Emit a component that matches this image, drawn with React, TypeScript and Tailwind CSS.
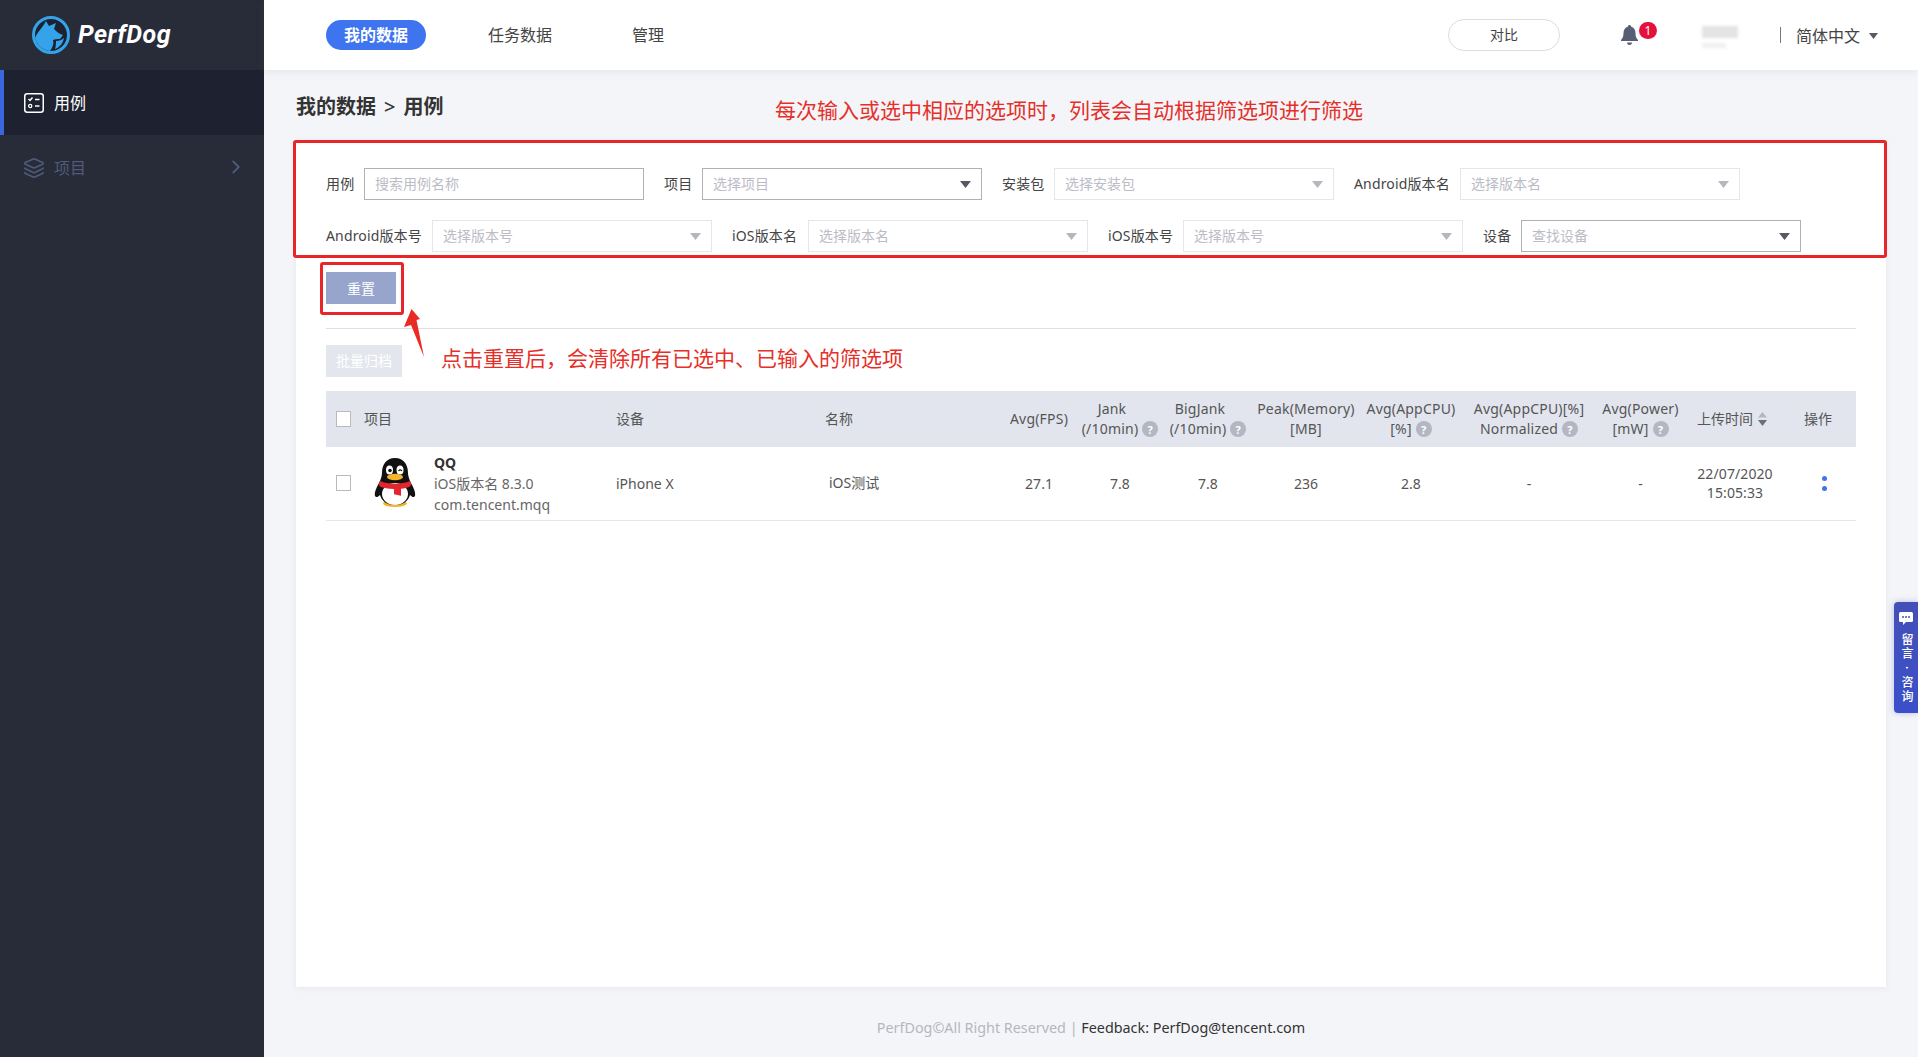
import React from "react";
import { ChevronRight, Layers } from "lucide-react";

function Caret({ dark }: { dark?: boolean }) {
  return (
    <svg width="11" height="7" viewBox="0 0 11 7" className="shrink-0">
      <path d="M0 0h11L5.5 7z" fill={dark ? "#555962" : "#b4b7be"} />
    </svg>
  );
}

function Filter({
  label,
  placeholder,
  strong,
  width,
  input,
}: {
  label: string;
  placeholder: string;
  strong?: boolean;
  width: string;
  input?: boolean;
}) {
  return (
    <div className="flex items-center mr-5">
      <span className={`${width} whitespace-nowrap text-[14px] leading-[32px] tracking-[0.15px] text-[#444] mr-2.5`}>{label}</span>
      <div
        className={`w-[280px] h-8 bg-white border flex items-center justify-between pl-2.5 pr-2.5 text-[14px] text-[#bcbcc6] ${
          strong ? "border-[#b0b1b6]" : "border-[#e4e6ec]"
        }`}
      >
        <span className="pb-[2px]">{placeholder}</span>
        {!input && <Caret dark={strong} />}
      </div>
    </div>
  );
}

function Help() {
  return (
    <span className="ml-[4px] inline-flex items-center justify-center w-[16px] h-[16px] rounded-full bg-[#b4b7c2] text-white text-[11px] leading-none font-bold shrink-0">
      ?
    </span>
  );
}

function Head({ top, bottom, help, shift }: { top: string; bottom?: string; help?: boolean; shift?: boolean }) {
  return (
    <th className="font-normal p-0 align-middle">
      <div className="flex flex-col items-center leading-[20px] tracking-[0.2px] whitespace-nowrap">
        <span className={shift ? "pr-4" : ""}>{top}</span>
        {bottom && (
          <span className="flex items-center">
            {bottom}
            {help && <Help />}
          </span>
        )}
      </div>
    </th>
  );
}

function Penguin() {
  return (
    <svg width="42" height="50" viewBox="0 0 42 50" className="shrink-0">
      <ellipse cx="21" cy="45.5" rx="12" ry="3.5" fill="#f5b324" />
      <path d="M21 0C12 0 8 7 8 15c0 3-1 5-2 8-3 6-6 11-5 15 1 2 3 1 5-1 2 7 8 10 15 10s13-3 15-10c2 2 4 3 5 1 1-4-2-9-5-15-1-3-2-5-2-8C34 7 30 0 21 0z" fill="#111" />
      <ellipse cx="21" cy="36" rx="13" ry="11" fill="#fff" />
      <ellipse cx="15.5" cy="12" rx="3.5" ry="4.5" fill="#fff" />
      <ellipse cx="26" cy="12" rx="3.5" ry="4.5" fill="#fff" />
      <circle cx="16" cy="12.5" r="1.8" fill="#111" />
      <path d="M24.5 13c1-1.6 2.600-1.600 3.500 0" stroke="#111" strokeWidth="1.2" fill="none" />
      <ellipse cx="21" cy="19" rx="8" ry="3.200" fill="#f7b62a" />
      <path d="M6 23c8 3.500 22 3.500 30 0 1.500 1.500 1.500 4 0 5.500-2 1-6 2-9 2.300v7l-7-1.500v-5.300c-6 0-11-1-14-2.500-1.500-1.500-1.500-4 0-5.500z" fill="#e3262e" />
    </svg>
  );
}

function Logo() {
  return (
    <svg width="38" height="38" viewBox="0 0 38 38" className="shrink-0">
      <circle cx="19" cy="19" r="17.500" fill="#1d2230" stroke="#35a3ea" strokeWidth="3" />
      <path d="M3 22C6 15 11 11 14 5l3 5 7-3-2 6c3 3 5 5 9 6l-3 4c-3 0-5 0-7 1 1 3 0 7-3 11-8-1-13-6-15-13z" fill="#35a3ea" />
      <path d="M24 25c3 0 6-1 8-3-1 5-4 9-9 11 1-3 1-6 1-8z" fill="#35a3ea" />
    </svg>
  );
}

function CaseIcon() {
  return (
    <svg width="20" height="20" viewBox="0 0 20 20" fill="none" className="shrink-0">
      <rect x="0.750" y="0.750" width="18.500" height="18.500" rx="2.500" stroke="#fff" strokeWidth="1.500" />
      <path d="M4.500 6l1.500 1.500 2.500-3M11 6.500h4.500M11 13h4.500" stroke="#fff" strokeWidth="1.500" />
      <circle cx="6.200" cy="13" r="1.600" stroke="#fff" strokeWidth="1.300" />
    </svg>
  );
}

function Bell() {
  return (
    <svg width="17" height="20" viewBox="0 0 17 20" className="shrink-0">
      <path d="M8.500 0C9.500 0 10 .7 10 1.500c3 .8 4.500 3.500 4.500 6.500 0 3 .6 5 2.500 7v1H0v-1c1.900-2 2.500-4 2.500-7 0-3 1.500-5.700 4.500-6.500C7 .7 7.500 0 8.500 0z" fill="#5a5e74" />
      <path d="M6 17.500h5c0 1.500-1 2.500-2.500 2.500S6 19 6 17.500z" fill="#5a5e74" />
    </svg>
  );
}

const colClass = [
  "w-[290px]",
  "w-[209px]",
  "w-[179px]",
  "w-[70px]",
  "w-[92px]",
  "w-[84px]",
  "w-[112px]",
  "w-[98px]",
  "w-[138px]",
  "w-[85px]",
  "w-[104px]",
  "w-[69px]",
];

export default function App() {
  return (
    <div className="relative flex h-screen w-full overflow-hidden bg-[#f4f5f9] font-['Noto_Sans','Noto_Sans_CJK_SC',sans-serif] text-[#444]">
      {/* Sidebar */}
      <aside className="w-[264px] shrink-0 bg-[#282c38] flex flex-col">
        <div className="h-[70px] flex items-center pl-[32px] gap-[8px]">
          <Logo />
          <span className="font-['Roboto',sans-serif] italic font-bold text-[25px] text-white tracking-[0.5px]">PerfDog</span>
        </div>
        <div className="h-[65px] bg-[#1e2130] border-l-4 border-[#3a67e0] flex items-center pl-[20px] gap-[10px] text-white text-[16px]">
          <CaseIcon />
          <span>用例</span>
        </div>
        <div className="h-[65px] flex items-center pl-[23px] pr-[17px] gap-[9px] text-[#505a7a] text-[16px]">
          <Layers size={22} strokeWidth={1.8} className="shrink-0" />
          <span className="flex-1">项目</span>
          <ChevronRight size={22} strokeWidth={2} className="-mt-[2px]" />
        </div>
      </aside>

      {/* Main */}
      <div className="flex-1 min-w-0 flex flex-col">
        <header className="relative h-[70px] shrink-0 bg-white shadow-[0_2px_8px_rgba(120,130,160,0.12)] flex items-center pl-[62px] pr-[40px] text-[16px] text-[#444]">
          <div className="w-[100px] h-[30px] rounded-full bg-[#3e74ef] text-white font-bold flex items-center justify-center">我的数据</div>
          <span className="ml-[62px]">任务数据</span>
          <span className="ml-[80px]">管理</span>
          <div className="flex-1" />
          <div className="w-[112px] h-[32px] rounded-full border border-[#dcdde2] flex items-center justify-center text-[14px] pb-[2px]">对比</div>
          <div className="relative ml-[61px] mr-[64px] w-[17px] h-[20px] -mt-[1px]">
            <Bell />
            <span className="absolute left-[18px] -top-[3px] w-[18px] h-[17px] rounded-full bg-[#e6103c] text-white text-[12px] leading-[17px] text-center">1</span>
          </div>
          <div className="w-[36px] flex flex-col gap-[5px] mt-[4px] blur-[1.5px]">
            <div className="w-[36px] h-[12px] bg-[#e4e4e4]" />
            <div className="w-[24px] h-[5px] bg-[#f0f0f0]" />
          </div>
          <div className="ml-[42px] w-px h-[16px] bg-[#777]" />
          <span className="ml-[15px] mt-[2px]">简体中文</span>
          <span className="ml-[9px] mt-[2px]">
            <svg width="9" height="6" viewBox="0 0 9 6">
              <path d="M0 0h9L4.500 6z" fill="#555962" />
            </svg>
          </span>
        </header>

        <main className="relative flex-1 min-h-0 px-[32px] flex flex-col">
          <div className="h-[71px] shrink-0 flex items-center text-[20px] font-bold text-[#333] leading-none pt-[3px]">
            我的数据<span className="mx-[8px] font-medium">&gt;</span>用例
          </div>

          <section className="relative h-[846px] shrink-0 bg-white shadow-[0_1px_6px_rgba(120,130,160,0.12)] px-[30px] pt-[27px]">
            <div className="flex flex-wrap gap-y-5">
              <Filter label="用例" width="w-[28px]" placeholder="搜索用例名称" strong input />
              <Filter label="项目" width="w-[28px]" placeholder="选择项目" strong />
              <Filter label="安装包" width="w-[42px]" placeholder="选择安装包" />
              <Filter label="Android版本名" width="w-[96px]" placeholder="选择版本名" />
              <Filter label="Android版本号" width="w-[96px]" placeholder="选择版本号" />
              <Filter label="iOS版本名" width="w-[66px]" placeholder="选择版本名" />
              <Filter label="iOS版本号" width="w-[65px]" placeholder="选择版本号" />
              <Filter label="设备" width="w-[28px]" placeholder="查找设备" strong />
            </div>

            <div className="mt-5 w-[70px] h-8 bg-[#97a5cd] text-white text-[14px] flex items-center justify-center">重置</div>
            <div className="mt-6 h-px bg-[#dddfe5]" />
            <div className="mt-4 w-[76px] h-8 bg-[#e4e6ee] text-white text-[14px] flex items-center justify-center pb-[2px]">批量归档</div>

            <table className="mt-[14px] w-[1530px] table-fixed border-collapse text-[14px] text-[#555]">
              <colgroup>
                {colClass.map((c) => (
                  <col key={c} className={c} />
                ))}
              </colgroup>
              <thead>
                <tr className="h-[56px] bg-[#e2e5ee]">
                  <th className="font-normal p-0 text-left">
                    <div className="flex items-center pl-[10px] gap-[13px] pb-[1px]">
                      <span className="w-[15px] h-[16px] bg-white border border-[#b9bac0]" />
                      <span>项目</span>
                    </div>
                  </th>
                  <th className="font-normal p-0 pb-[1px] text-left">设备</th>
                  <th className="font-normal p-0 pb-[1px] text-left">名称</th>
                  <Head top="Avg(FPS)" />
                  <Head top="Jank" bottom="(/10min)" help shift />
                  <Head top="BigJank" bottom="(/10min)" help shift />
                  <Head top="Peak(Memory)" bottom="[MB]" />
                  <Head top="Avg(AppCPU)" bottom="[%]" help />
                  <Head top="Avg(AppCPU)[%]" bottom="Normalized" help />
                  <Head top="Avg(Power)" bottom="[mW]" help />
                  <th className="font-normal p-0 pr-[6px] pb-[1px]">
                    <div className="flex items-center justify-center gap-[5px]">
                      <span>上传时间</span>
                      <svg width="9" height="14" viewBox="0 0 9 14">
                        <path d="M4.500 0L9 5.500H0z" fill="#b4b7c2" />
                        <path d="M0 8h9l-4.500 6z" fill="#6b6f7d" />
                      </svg>
                    </div>
                  </th>
                  <th className="font-normal p-0 pr-[7px] pb-[1px]">操作</th>
                </tr>
              </thead>
              <tbody>
                <tr className="h-[73px] border-b border-[#e4e6ec] text-center">
                  <td className="p-0 text-left">
                    <div className="flex items-center pl-[10px]">
                      <span className="w-[15px] h-[16px] bg-white border border-[#b9bac0]" />
                      <span className="ml-[23px]">
                        <Penguin />
                      </span>
                      <div className="ml-[18px] flex flex-col leading-[21px] text-[#666] whitespace-nowrap">
                        <span className="font-bold text-[#333]">QQ</span>
                        <span>iOS版本名 8.3.0</span>
                        <span>com.tencent.mqq</span>
                      </div>
                    </div>
                  </td>
                  <td className="p-0 text-left">iPhone X</td>
                  <td className="p-0 text-left pl-[4px] pb-[2px]">iOS测试</td>
                  <td className="p-0">27.1</td>
                  <td className="p-0">7.8</td>
                  <td className="p-0">7.8</td>
                  <td className="p-0">236</td>
                  <td className="p-0">2.8</td>
                  <td className="p-0">-</td>
                  <td className="p-0">-</td>
                  <td className="p-0 leading-[19px] tracking-[0.1px]">
                    22/07/2020
                    <br />
                    15:05:33
                  </td>
                  <td className="p-0 pl-[5px]">
                    <div className="flex flex-col items-center gap-[5px]">
                      <span className="w-[5px] h-[5px] rounded-full bg-[#3e74ef]" />
                      <span className="w-[5px] h-[5px] rounded-full bg-[#3e74ef]" />
                    </div>
                  </td>
                </tr>
              </tbody>
            </table>
          </section>

          <footer className="flex-1 flex items-center justify-center text-[14.35px] text-[#b4b7c0] whitespace-nowrap pt-[12px]">
            <span>PerfDog©All Right Reserved |&nbsp;</span>
            <span className="text-[#333]">Feedback: PerfDog@tencent.com</span>
          </footer>
        </main>
      </div>

      {/* Annotations drawn over the page */}
      <div className="absolute left-[293px] top-[140px] w-[1594px] h-[118px] border-[3px] border-[#e8262a] rounded-[3px] pointer-events-none" />
      <div className="absolute left-[320px] top-[262px] w-[84px] h-[53px] border-[3px] border-[#e8262a] rounded-[3px] pointer-events-none" />
      <span className="absolute left-[775px] top-[94px] text-[21px] leading-[32px] text-[#e5302a] whitespace-nowrap">每次输入或选中相应的选项时，列表会自动根据筛选项进行筛选</span>
      <span className="absolute left-[441px] top-[342px] text-[21px] leading-[32px] text-[#e5302a] whitespace-nowrap">点击重置后，会清除所有已选中、已输入的筛选项</span>
      <svg className="absolute left-[400px] top-[305px]" width="30" height="56" viewBox="0 0 30 56">
        <path d="M11.500 4L20 14l-3.500 1L24 52 11 20l-7 2z" fill="#ea2a24" />
      </svg>

      {/* Floating feedback tab */}
      <div className="absolute right-0 top-[602px] w-[24px] h-[111px] rounded-l-[4px] bg-gradient-to-b from-[#4450b8] to-[#3a4fc9] shadow-[0_0_6px_rgba(70,80,190,0.35)] flex flex-col items-center pt-[9px] text-white">
        <svg width="14" height="14" viewBox="0 0 14 14" className="shrink-0">
          <path d="M1.500 1h11A1.500 1.500 0 0 1 14 2.500v7A1.500 1.500 0 0 1 12.500 11H7l-3 3v-3H1.500A1.500 1.500 0 0 1 0 9.500v-7A1.500 1.500 0 0 1 1.500 1z" fill="#fff" />
          <circle cx="4" cy="6" r="1" fill="#4450b8" />
          <circle cx="7" cy="6" r="1" fill="#4450b8" />
          <circle cx="10" cy="6" r="1" fill="#4450b8" />
        </svg>
        <span className="mt-[8px] text-[12px] leading-[14px] font-medium [writing-mode:vertical-rl] tracking-[2px] whitespace-nowrap">留言 · 咨询</span>
      </div>
    </div>
  );
}
